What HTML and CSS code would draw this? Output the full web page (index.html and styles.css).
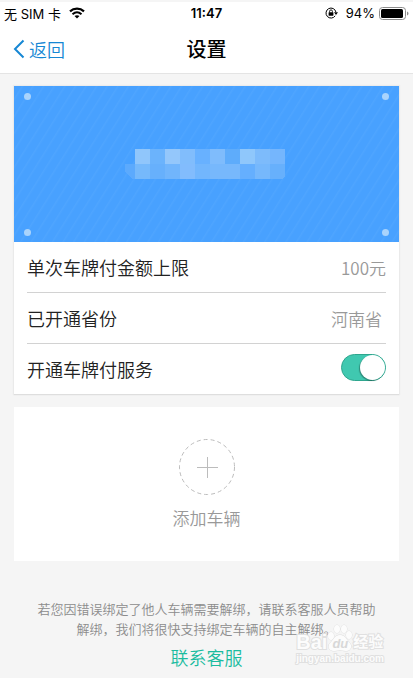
FILE: index.html
```html
<!DOCTYPE html>
<html lang="zh-CN">
<head>
  <meta charset="UTF-8">
  <meta name="viewport" content="width=device-width, initial-scale=1">
  <title>设置</title>
  <link rel="stylesheet" href="styles.css">
</head>
<body>

  <header class="header">
    <div class="status-bar">
      <div class="status-left">
        <span>无 SIM 卡</span>
        <svg class="icon-wifi" width="16" height="12" viewBox="0 0 16 12">
          <path d="M1 4.4C5 .7 11 .7 15 4.4" fill="none" stroke="#000" stroke-width="2.200"/>
          <path d="M3.5 7.200C6.2 4.8 9.8 4.8 12.5 7.200" fill="none" stroke="#000" stroke-width="2"/>
          <path d="M8 11.6L5.5 9.1C7 7.8 9 7.8 10.5 9.1Z"/>
        </svg>
      </div>
      <span class="status-time">11:47</span>
      <div class="status-right">
        <svg class="icon-lock" width="13" height="12" viewBox="0 0 13 12">
          <path d="M10.2 8.8A5 5 0 1 1 10.9 5" fill="none" stroke="#000"/>
          <path d="M9 5.2H13L11 8Z"/>
          <rect x="3.6" y="5.3" width="4.8" height="3.4" rx=".4"/>
          <path d="M4.6 5.5V4.3a1.4 1.4 0 0 1 2.8 0v1.2" fill="none" stroke="#000" stroke-width=".9"/>
        </svg>
        <span>94%</span>
        <svg width="30" height="13" viewBox="0 0 30 13">
          <rect x=".5" y=".5" width="26" height="12" rx="3" fill="none" stroke="#8c8c8c"/>
          <rect x="2" y="2" width="22" height="9" rx="1.5"/>
          <path d="M28 4.5c2 .7 2 3.3 0 4z" fill="#8c8c8c"/>
        </svg>
      </div>
    </div>
    <nav class="nav-bar">
      <a class="back" href="#">
        <svg width="12" height="20" viewBox="0 0 12 20">
          <path d="M10.500 1.500L2 10l8.500 8.500" fill="none" stroke="#1687d4" stroke-width="2"/>
        </svg>
        <span>返回</span>
      </a>
      <h1 class="title">设置</h1>
    </nav>
  </header>

  <main class="content">
    <section class="card">
      <div class="plate">
        <i class="rivet rivet-tl"></i>
        <i class="rivet rivet-tr"></i>
        <i class="rivet rivet-bl"></i>
        <i class="rivet rivet-br"></i>
        <!-- 车牌号打码 -->
        <svg class="mosaic" width="160" height="30" viewBox="0 0 160 30" shape-rendering="crispEdges">
          <path d="M0 15h10v15H7L0 22z" fill="#5caafd"/>
          <path d="M10 0h15v15H10z" fill="#90c6fb"/>
          <path d="M25 0h15v15H25z" fill="#6bb3fc"/>
          <path d="M40 0h15v15H40z" fill="#94c7fb"/>
          <path d="M55 0h15v15H55z" fill="#81bdfc"/>
          <path d="M70 0h15v15H70z" fill="#68b1ff"/>
          <path d="M85 0h15v15H85z" fill="#7fbcfc"/>
          <path d="M100 0h15v15h-15z" fill="#5eacfb"/>
          <path d="M115 0h15v15h-15z" fill="#8fc7fb"/>
          <path d="M130 0h15v15h-15z" fill="#7dbbfb"/>
          <path d="M145 0h15v15h-15z" fill="#75b6fd"/>
          <path d="M10 15h15v15H10z" fill="#76b9fb"/>
          <path d="M25 15h15v15H25z" fill="#67b0fc"/>
          <path d="M40 15h15v15H40z" fill="#71b5fc"/>
          <path d="M55 15h15v15H55z" fill="#82bcfd"/>
          <path d="M70 15h15v15H70z" fill="#72b6fd"/>
          <path d="M85 15h30v15H85z" fill="#77b8fc"/>
          <path d="M115 15h15v15h-15z" fill="#65affe"/>
          <path d="M130 15h15v15h-15z" fill="#76b8fc"/>
          <path d="M145 15h15v12l-3 3h-12z" fill="#67b0fc"/>
        </svg>
      </div>
      <ul class="list">
        <li>
          <span>单次车牌付金额上限</span>
          <span class="value">100元</span>
        </li>
        <li>
          <span>已开通省份</span>
          <span class="value value-province">河南省</span>
        </li>
        <li>
          <label for="service">开通车牌付服务</label>
          <input class="switch" type="checkbox" id="service" checked>
        </li>
      </ul>
    </section>

    <button class="add" type="button">
      <svg width="56" height="56" viewBox="0 0 56 56" fill="none">
        <circle cx="28" cy="28" r="27.500" stroke="#bcbcbc" stroke-dasharray="4 3"/>
        <path d="M18 28.500h21M28.500 18v21" stroke="#bcbcbc"/>
      </svg>
      <span>添加车辆</span>
    </button>
  </main>

  <footer class="footer">
    <p>若您因错误绑定了他人车辆需要解绑，请联系客服人员帮助<br>解绑，我们将很快支持绑定车辆的自主解绑。</p>
    <a class="service-link" href="#">联系客服</a>
    <div class="watermark">
      <div class="wm-row">
        <span class="wm-logo">Bai</span>
        <span class="wm-paw">
          <svg width="26" height="28" viewBox="0 0 26 28" fill="#fcfcfc" stroke="#dedede">
            <ellipse cx="4" cy="12" rx="3" ry="4"/>
            <ellipse cx="10" cy="5" rx="3" ry="4"/>
            <ellipse cx="17" cy="5" rx="3" ry="4"/>
            <ellipse cx="22" cy="11" rx="3" ry="4"/>
            <path d="M13 11c5 0 6 4 9 7 4 4 2 9-3 9-3 0-4-1-6-1s-3 1-6 1c-6 0-7-6-3-9 3-3 4-7 9-7z"/>
          </svg>
          <span class="wm-du">du</span>
        </span>
        <span class="wm-cn">经验</span>
      </div>
      <div class="wm-url">jingyan.baidu.com</div>
    </div>
  </footer>

</body>
</html>
```
FILE: styles.css
```css
* {
  box-sizing: border-box;
}
body {
  margin: 0;
  border-top: 2px solid #f5f5f5;
  background: #f5f5f5;
  color: #222;
  font-family: "Noto Sans CJK SC", sans-serif;
  font-size: 18px;
  font-weight: 350;
}
a {
  text-decoration: none;
}
svg {
  display: block;
}

/* header */
.header {
  border-bottom: 1px solid #e4e4e4;
  background: #fff;
}
.status-bar {
  display: grid;
  grid-template-columns: 1fr auto 1fr;
  align-items: center;
  height: 22px;
  padding: 0 4px;
  color: #000;
  font-family: Inter, "Noto Sans CJK SC", sans-serif;
  font-size: 13px;
  font-weight: 400;
}
.status-left,
.status-right {
  display: flex;
  align-items: center;
  gap: 8px;
}
.status-right {
  justify-content: flex-end;
  gap: 4px;
}
.icon-lock {
  margin-right: 4px;
}
.status-time {
  font-weight: 600;
}
.nav-bar {
  display: grid;
  grid-template-columns: 1fr auto 1fr;
  align-items: center;
  height: 49px;
  padding: 0 13px;
}
.back {
  display: flex;
  align-items: center;
  gap: 4px;
  color: #1687d4;
}
.title {
  margin: 0;
  color: #000;
  font-size: 20px;
  font-weight: 500;
}

/* content */
.content {
  display: flex;
  flex-direction: column;
  gap: 13px;
  padding: 12px 14px 0;
}
.card {
  background: #fff;
  box-shadow: 0 1px 1px #dedede, 0 0 1px 1px #ececec;
}
.plate {
  position: relative;
  display: flex;
  justify-content: center;
  align-items: center;
  height: 156px;
  background: repeating-linear-gradient(122deg, #48a1ff 0, #48a1ff 6px, #4fa5ff 7px, #48a1ff 9px);
}
.mosaic {
  margin-right: 4px;
}
.rivet {
  position: absolute;
  width: 7px;
  height: 7px;
  border-radius: 50%;
  background: #a9d3fc;
}
.rivet-tl { top: 7px; left: 10px; }
.rivet-tr { top: 7px; right: 10px; }
.rivet-bl { bottom: 6px; left: 10px; }
.rivet-br { bottom: 6px; right: 10px; }

.list {
  margin: 0;
  padding: 0 13px;
  list-style: none;
}
.list li {
  display: flex;
  box-sizing: content-box;
  justify-content: space-between;
  align-items: center;
  height: 50px;
}
.list li + li {
  border-top: 1px solid #d2d2d2;
}
.value {
  color: #999;
  font-size: 17px;
}
.value-province {
  padding-right: 4px;
}
.switch {
  appearance: none;
  display: flex;
  justify-content: flex-end;
  width: 45px;
  height: 27px;
  margin: 0 0 4px;
  border: 1px solid #2fa68e;
  border-radius: 14px;
  background: #40c8b0;
}
.switch::before {
  content: "";
  width: 25px;
  height: 25px;
  border-radius: 50%;
  background: #fff;
  box-shadow: -1px 1px 1px rgba(0, 0, 0, 0.3);
}
.switch:not(:checked) {
  justify-content: flex-start;
  background: #ddd;
}
.add {
  display: flex;
  flex-direction: column;
  justify-content: center;
  align-items: center;
  gap: 10px;
  height: 154px;
  padding: 0;
  border: none;
  background: #fff;
  color: #999;
  font: inherit;
  font-size: 17px;
}

/* footer */
.footer {
  position: relative;
  padding-top: 38px;
  text-align: center;
}
.footer p {
  margin: 0;
  color: #8c8c8c;
  font-size: 13px;
  line-height: 20px;
}
.service-link {
  display: inline-block;
  color: #1abc9f;
  line-height: 36px;
}

/* watermark */
.watermark {
  position: absolute;
  top: 63px;
  right: 29px;
  color: #fcfcfc;
  font-family: "Liberation Sans", "Noto Sans CJK SC", sans-serif;
  font-weight: 700;
  text-align: left;
  -webkit-text-stroke: 2px #e0e0e0;
  paint-order: stroke;
  pointer-events: none;
}
.wm-row {
  display: flex;
  align-items: flex-end;
}
.wm-logo {
  font-size: 20px;
  line-height: 20px;
}
.wm-paw {
  position: relative;
}
.wm-du {
  position: absolute;
  right: 0;
  bottom: 0;
  left: 0;
  color: #d8d8d8;
  font-size: 13px;
  font-style: italic;
  line-height: 16px;
  text-align: center;
  -webkit-text-stroke: 0;
}
.wm-cn {
  font-size: 15px;
  line-height: 20px;
}
.wm-url {
  font-size: 10px;
  line-height: 14px;
}
```
